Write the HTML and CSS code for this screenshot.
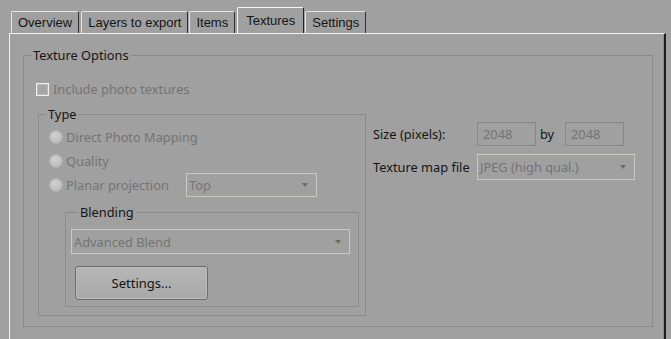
FILE: index.html
```html
<!DOCTYPE html>
<html lang="en">
<head>
    <meta charset="UTF-8">
    <title>Export Options - Textures</title>
    <link rel="stylesheet" href="styles.css">
</head>
<body>

    <!-- Tab strip -->
    <div class="tabs">
        <div class="tab">Overview</div>
        <div class="tab">Layers to export</div>
        <div class="tab">Items</div>
        <div class="tab active">Textures</div>
        <div class="tab">Settings</div>
    </div>

    <!-- Textures page -->
    <div class="panel">
        <fieldset class="group options">
            <legend>Texture Options</legend>
            <div class="check-row disabled"><span class="checkbox"></span>Include photo textures</div>

            <div class="options-body">
                <fieldset class="group type">
                    <legend>Type</legend>
                    <div class="radio-row disabled first"><span class="radio"></span>Direct Photo Mapping</div>
                    <div class="radio-row disabled"><span class="radio"></span>Quality</div>
                    <div class="radio-row disabled">
                        <span class="radio"></span><span class="radio-label">Planar projection</span>
                        <div class="combo combo-top">Top<span class="arrow"></span></div>
                    </div>

                    <fieldset class="group blending">
                        <legend>Blending</legend>
                        <div class="combo combo-blend">Advanced Blend<span class="arrow"></span></div>
                        <button class="btn">Settings...</button>
                    </fieldset>
                </fieldset>

                <div class="side">
                    <div class="side-row size-row">
                        <span class="side-label">Size (pixels):</span>
                        <div class="input">2048</div>
                        <span class="by">by</span>
                        <div class="input">2048</div>
                    </div>
                    <div class="side-row file-row">
                        <span class="side-label">Texture map file</span>
                        <div class="combo combo-file">JPEG (high qual.)<span class="arrow"></span></div>
                    </div>
                </div>
            </div>
        </fieldset>
    </div>

</body>
</html>
```

FILE: styles.css
```css
html, body {
    height: 100%;
}

body {
    margin: 0;
    background-color: #a0a0a0;
    font-family: 'Noto Sans', 'Open Sans', sans-serif;
    font-size: 12.8px;
    color: #141414;
    display: flex;
    flex-direction: column;
    overflow: hidden;
}

/* Tabs */

.tabs {
    display: flex;
    align-items: flex-end;
    height: 33px;
    padding-left: 11px;
    flex-shrink: 0;
}

.tab {
    height: 22px;
    line-height: 22px;
    padding: 0 6px;
    margin-right: 1px;
    font-family: 'Liberation Sans', Arial, sans-serif;
    font-size: 13px;
    color: #141414;
    background-color: #a0a0a0;
    border-top: 1px solid #e4e4e4;
    border-left: 1px solid #e4e4e4;
    border-right: 1px solid #2e2e2e;
    border-radius: 2px 2px 0 0;
    box-sizing: border-box;
}

.tab:first-child {
    margin-right: 2px;
}

.tab.active {
    height: 27px;
    line-height: 25px;
    margin: 0 1px -1px 1px;
    padding: 0 8px;
    border-top-color: #f4f4f4;
    border-left-color: #f4f4f4;
    border-right-color: #222;
}

/* Page */

.panel {
    flex: 1;
    margin: 0 5px 0 9px;
    border-top: 1px solid #f0f0f0;
    border-left: 1px solid #f0f0f0;
    border-right: 2px solid #1c1c1c;
    box-shadow: inset -1px 0 0 #8c8c8c;
}

.group {
    margin: 0;
    padding: 0;
    min-width: 0;
    border: 1px solid #8a8a8a;
    box-sizing: border-box;
}

.group legend {
    padding: 0 2px;
    margin-left: 7px;
    line-height: 16px;
    color: #141414;
}

.options {
    margin: 13px 11px 0 13px;
    padding-bottom: 10px;
}

.disabled {
    color: #747474;
}

.check-row {
    display: flex;
    align-items: center;
    height: 16px;
    margin: 18px 0 0 12px;
}

.checkbox {
    width: 11px;
    height: 11px;
    margin-right: 4px;
    border: 1px solid #f0f0f0;
    background-color: #a6a6a6;
    box-shadow: inset 0 0 0 1px #b8b8b8;
}

.options-body {
    display: flex;
    align-items: flex-start;
    margin: 9px 0 0 14px;
}

/* Type group */

.type {
    width: 328px;
    padding-bottom: 8px;
    flex-shrink: 0;
}

.radio-row {
    display: flex;
    align-items: center;
    height: 24px;
    padding-left: 11px;
}

.radio-row.first {
    margin-top: 3px;
}

.radio {
    width: 12px;
    height: 12px;
    margin-right: 4px;
    border-radius: 50%;
    background: radial-gradient(circle at 40% 35%, #d2d2d2, #bcbcbc 70%);
    box-shadow: 0 0 0 1px #b2b2b2;
}

.radio-label {
    width: 120px;
}

.combo {
    position: relative;
    box-sizing: border-box;
    border: 1px solid #c9c9bd;
    color: #747474;
    padding-left: 2px;
    display: flex;
    align-items: center;
}

.arrow {
    position: absolute;
    right: 8px;
    top: 50%;
    margin-top: -2px;
    border-left: 3px solid transparent;
    border-right: 3px solid transparent;
    border-top: 4px solid #6c6c5e;
}

.combo-top {
    width: 131px;
    height: 24px;
}

/* Blending group */

.blending {
    margin: 7px 6px 0 26px;
    padding: 0 0 6px 5px;
}

.combo-blend {
    width: 279px;
    height: 25px;
    margin-top: 9px;
}

.btn {
    display: block;
    width: 133px;
    height: 34px;
    margin: 12px 0 0 4px;
    font-family: inherit;
    font-size: 13px;
    color: #141414;
    border: 1px solid #6c6c6c;
    border-radius: 3px;
    background: linear-gradient(#b6b6b6, #a9a9a9);
    box-shadow: inset 0 0 0 1px #bababa;
    cursor: pointer;
}

/* Right column */

.side {
    margin-left: 7px;
}

.side-row {
    display: flex;
    align-items: center;
}

.size-row {
    margin-top: 16px;
    height: 24px;
}

.file-row {
    margin-top: 8px;
    height: 26px;
}

.side-label {
    width: 104px;
}

.input {
    width: 59px;
    height: 24px;
    box-sizing: border-box;
    border: 1px solid #878787;
    color: #747474;
    padding-left: 5px;
    line-height: 22px;
}

.by {
    width: 25px;
    padding-left: 4px;
}

.combo-file {
    width: 158px;
    height: 26px;
}
```
